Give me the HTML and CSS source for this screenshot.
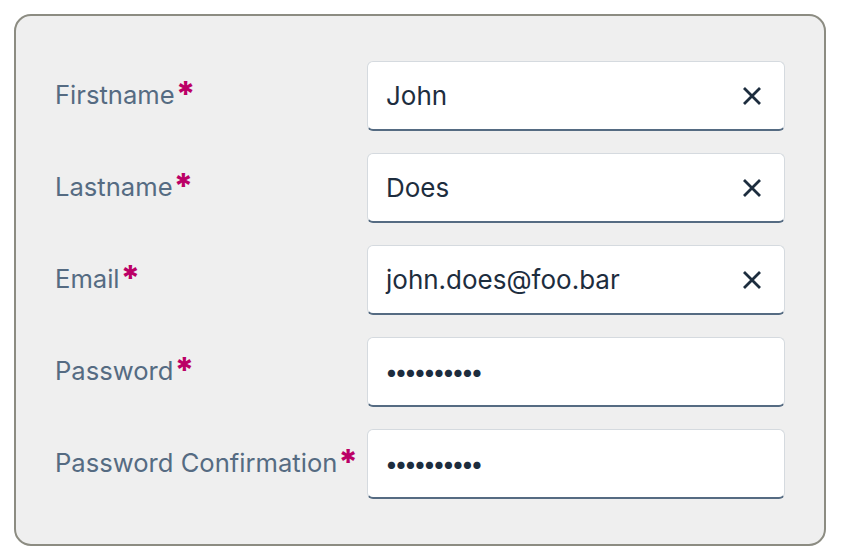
FILE: index.html
```html
<!DOCTYPE html>
<html>
<head>
<meta charset="utf-8">
<link rel="stylesheet" href="styles.css">
</head>
<body>
<form class="panel">
  <div class="row">
    <label class="label">Firstname<span class="req">*</span></label>
    <div class="field"><span class="value">John</span><svg class="clear" viewBox="0 0 20 20"><path d="M2 2L18 18M18 2L2 18"/></svg></div>
  </div>
  <div class="row">
    <label class="label">Lastname<span class="req">*</span></label>
    <div class="field"><span class="value">Does</span><svg class="clear" viewBox="0 0 20 20"><path d="M2 2L18 18M18 2L2 18"/></svg></div>
  </div>
  <div class="row">
    <label class="label">Email<span class="req">*</span></label>
    <div class="field"><span class="value">john.does@foo.bar</span><svg class="clear" viewBox="0 0 20 20"><path d="M2 2L18 18M18 2L2 18"/></svg></div>
  </div>
  <div class="row">
    <label class="label">Password<span class="req">*</span></label>
    <div class="field"><span class="value dots">••••••••••</span></div>
  </div>
  <div class="row">
    <label class="label">Password Confirmation<span class="req">*</span></label>
    <div class="field"><span class="value dots">••••••••••</span></div>
  </div>
</form>
</body>
</html>
```
FILE: styles.css
```css
html, body { margin: 0; padding: 0; background: #fff; }
body { padding: 14px 18px 0 14px; font-family: "Inter", "Liberation Sans", sans-serif; }
.panel {
  box-sizing: border-box;
  width: 812px;
  height: 532px;
  background: #efefef;
  border: 2px solid #8c8c82;
  border-radius: 17px;
  padding: 45px 39px 0 39px;
  display: flex;
  flex-direction: column;
  gap: 22px;
}
.row { display: flex; align-items: center; height: 70px; }
.label {
  flex: 0 0 312px;
  font-size: 25.6px;
  color: #556b82;
  padding-bottom: 3px;
  white-space: nowrap;
  display: flex;
  align-items: flex-start;
}
.req { color: #bb0066; font-weight: 800; font-size: 34px; line-height: 30px; margin-left: 1px; }
.field {
  box-sizing: border-box;
  width: 418px;
  height: 70px;
  background: #fff;
  border: 1.5px solid #d5dadf;
  border-bottom: 2px solid #556b82;
  border-radius: 6px;
  display: flex;
  align-items: center;
  padding: 0 22px 0 18px;
}
.value { flex: 1; font-size: 26px; color: #1d2d3e; }
.dots { font-size: 23px; font-weight: 700; letter-spacing: -1.4px; }
.clear { width: 20px; height: 20px; stroke: #1d2d3e; stroke-width: 2.8; fill: none; }
```
